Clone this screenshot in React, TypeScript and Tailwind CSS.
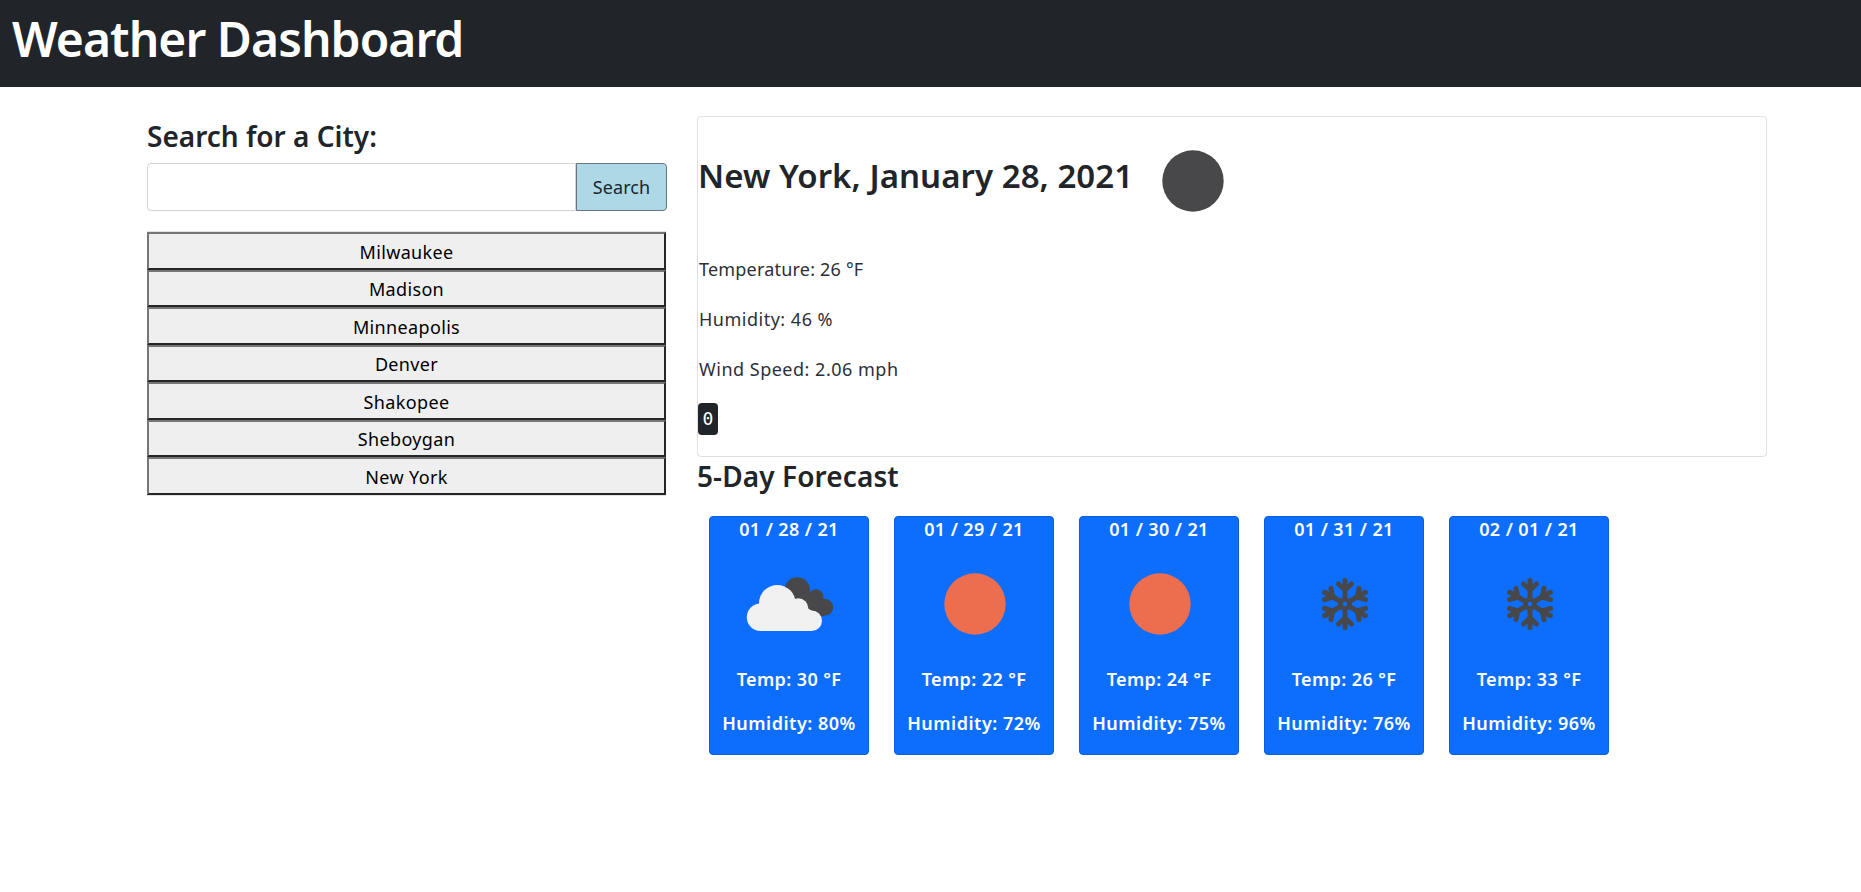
const FONT = "font-['Noto_Sans',sans-serif]";

function Sun() {
  return (
    <svg viewBox="0 0 100 100" className="w-[100px] h-[100px]">
      <circle cx="50" cy="50" r="30.7" fill="#ed6e4e" />
    </svg>
  );
}

function Moon() {
  return (
    <svg viewBox="0 0 100 100" className="w-[100px] h-[100px]">
      <circle cx="50" cy="50" r="30.7" fill="#48484a" />
    </svg>
  );
}

function Clouds() {
  return (
    <svg viewBox="0 0 100 100" className="w-[100px] h-[100px]">
      <g transform="translate(-1 0)">
        <g fill="#48484a">
          <circle cx="58.3" cy="36" r="12.7" />
          <circle cx="77" cy="42.7" r="7.5" />
          <circle cx="86" cy="53.3" r="8.3" />
          <path d="M50 35 L70 40 L86 45 L86 61.6 L70 66 L50 60 Z" />
        </g>
        <g fill="#f1f1f1">
          <circle cx="21.5" cy="63.3" r="13.7" />
          <circle cx="38.3" cy="49.3" r="18.3" />
          <circle cx="59.3" cy="54.3" r="10" />
          <circle cx="72.7" cy="66.7" r="10.3" />
          <path d="M21 50 L38 40 L60 50 L72.7 56.4 L72.7 77 L21.5 77 Z" />
        </g>
      </g>
    </svg>
  );
}

function Snow() {
  const arm = (
    <g>
      <path d="M50 45.5 V26.5" />
      <path d="M50 36 L43.5 30" />
      <path d="M50 36 L56.5 30" />
    </g>
  );
  return (
    <svg
      viewBox="0 0 100 100"
      className="w-[100px] h-[100px]"
      fill="none"
      stroke="#48484a"
      strokeWidth="5"
      strokeLinecap="round"
    >
      <circle cx="50" cy="50" r="4.8" strokeWidth="3.8" />
      {[0, 60, 120, 180, 240, 300].map((a) => (
        <g key={a} transform={`rotate(${a} 50 50)`}>
          {arm}
        </g>
      ))}
    </svg>
  );
}

const cities = ["Milwaukee", "Madison", "Minneapolis", "Denver", "Shakopee", "Sheboygan", "New York"];

const days = [
  { date: "01 / 28 / 21", icon: <Clouds />, temp: "30", hum: "80" },
  { date: "01 / 29 / 21", icon: <Sun />, temp: "22", hum: "72" },
  { date: "01 / 30 / 21", icon: <Sun />, temp: "24", hum: "75" },
  { date: "01 / 31 / 21", icon: <Snow />, temp: "26", hum: "76" },
  { date: "02 / 01 / 21", icon: <Snow />, temp: "33", hum: "96" },
];

export default function App() {
  return (
    <div className={`${FONT} min-h-[892px] bg-white text-[#212529]`}>
      <header className="h-[87px] bg-[#212529] pl-3 flex items-start">
        <h1 className="text-[48px] leading-[78px] font-semibold text-white tracking-[-0.95px]">Weather Dashboard</h1>
      </header>
      <main className="flex pl-[147px] pt-[29px] gap-[30px]">
        <section className="w-[520px] shrink-0">
          <h2 className="text-[28px] leading-[40px] font-semibold text-[#212529]">Search for a City:</h2>
          <div className="flex h-[48px] mt-[7px]">
            <input className="flex-1 min-w-0 border border-[#ced4da] rounded-l-[4px] bg-white" />
            <button className="w-[91px] pt-[1px] bg-[#add8e6] border border-[#6c757d] rounded-r-[4px] text-[18px] tracking-[0.1px] text-[#212529]">
              Search
            </button>
          </div>
          <div className="mt-[20px] mr-[1px] border-y border-[#dee2e6] flex flex-col">
            {cities.map((c) => (
              <button
                key={c}
                className="h-[37.5px] pt-[2px] bg-[#efefef] border-2 border-t-[#767676] border-l-[#767676] border-r-[#262626] border-b-[#262626] text-[18px] leading-[26px] tracking-[0.35px] text-black text-center"
              >
                {c}
              </button>
            ))}
          </div>
        </section>
        <section className="w-[1070px] shrink-0">
          <div className="h-[341px] border border-[#dfdfdf] rounded-[4px]">
            <div className="flex items-start pt-[14px]">
              <h2 className="text-[33px] leading-[100px] font-semibold tracking-[0.05px] w-[445px] whitespace-nowrap mt-[-5px]">New York, January 28, 2021</h2>
              <Moon />
            </div>
            <div className="text-[18px] leading-[26px] pl-[1px] mt-[25px] flex flex-col gap-[24px] text-[#2c3036]">
              <p className="tracking-[0.2px]">Temperature: 26 °F</p>
              <p className="tracking-[0.5px]">Humidity: 46 %</p>
              <p className="tracking-[0.5px]">Wind Speed: 2.06 mph</p>
            </div>
            <div className="mt-[21px] w-[20px] h-[32px] rounded-[4px] bg-[#212529] text-white text-[18px] leading-[32px] text-center font-['DejaVu_Sans_Mono',monospace]">
              0
            </div>
          </div>
          <h3 className="text-[28px] leading-[40px] font-semibold tracking-[0.1px] mt-[-1px]">5-Day Forecast</h3>
          <div className="flex gap-[25px] pl-[12px] mt-[20px]">
            {days.map((d) => (
              <div key={d.date} className="w-[160px] h-[239px] bg-[#0d6efd] border border-[#0b5ed7] rounded-[4px] text-white font-semibold text-[18px] text-center flex flex-col items-center">
                <div className="leading-[26px] mt-[-1px] tracking-[0.4px]">{d.date}</div>
                <div className="mt-[12px] ml-[1px]">{d.icon}</div>
                <div className="leading-[26px] mt-[12px] tracking-[0.4px]">Temp: {d.temp} °F</div>
                <div className="leading-[26px] mt-[18px] tracking-[0.5px]">Humidity: {d.hum}%</div>
              </div>
            ))}
          </div>
        </section>
      </main>
    </div>
  );
}
